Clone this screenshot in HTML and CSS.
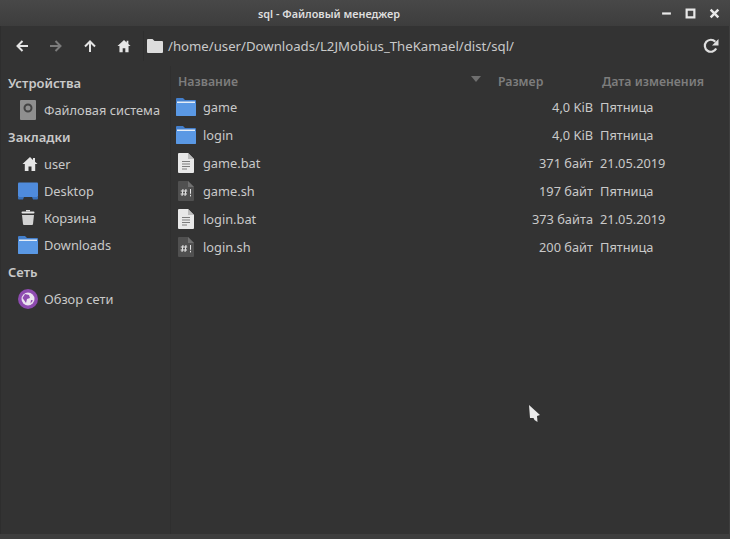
FILE: index.html
```html
<!DOCTYPE html>
<html lang="ru">
<head>
<meta charset="utf-8">
<title>sql - Файловый менеджер</title>
<link rel="stylesheet" href="styles.css">
</head>
<body>
<svg class="defs" width="0" height="0">
  <defs>
    <symbol id="folder" viewBox="0 0 20 18"><path d="M0 1a1 1 0 0 1 1-1h6l2 2h10a1 1 0 0 1 1 1v14a1 1 0 0 1-1 1H1a1 1 0 0 1-1-1z" fill="#437fcc"/><rect x="0" y="5" width="20" height="13" rx="1" fill="#5a98e4"/><rect x="1" y="3.500" width="18" height="1.500" fill="#e3ecf7"/></symbol>
    <symbol id="doc" viewBox="0 0 16 20"><path d="M0 1a1 1 0 0 1 1-1h9l6 6v13a1 1 0 0 1-1 1H1a1 1 0 0 1-1-1z" fill="#e8e8e8"/><path d="M10 0l6 6h-6z" fill="#bdbdbd"/><path d="M4 8.500h8M4 11h8M4 13.500h8M4 16h5" stroke="#7c7c7c" stroke-width="1"/></symbol>
    <symbol id="script" viewBox="0 0 16 20"><path d="M0 1a1 1 0 0 1 1-1h9l6 6v13a1 1 0 0 1-1 1H1a1 1 0 0 1-1-1z" fill="#505050"/><path d="M10 0l6 6h-6z" fill="#707070"/><path d="M5 8l-1 7M8 8l-1 7M2.800 10h6.400M2.600 13h6.400M12.500 8v4.800M12.500 13.800v1.600" stroke="#e4e4e4" stroke-width="1" fill="none"/></symbol>
    <symbol id="house" viewBox="0 0 16 16"><path d="M8 1L0.500 8h2.300v7h3.700v-4.500h3V15h3.700V8h2.300l-2.500-2.300V2h-2v1.900z" fill="#e6e6e6"/></symbol>
  </defs>
</svg>
<div class="window">
  <header class="titlebar">
    <span class="title">sql - Файловый менеджер</span>
    <div class="wm">
      <svg class="wm-icon" viewBox="0 0 10 10"><rect x="1" y="4" width="8" height="2" fill="#e8e8e8"/></svg>
      <svg class="wm-icon" viewBox="0 0 10 10"><path d="M1.500 1.500h7v7h-7z" fill="none" stroke="#e8e8e8" stroke-width="2"/></svg>
      <svg class="wm-icon" viewBox="0 0 10 10"><path d="M1.500 1.500l7 7M8.500 1.500l-7 7" stroke="#e8e8e8" stroke-width="2.200"/></svg>
    </div>
  </header>
  <div class="toolbar">
    <div class="nav">
      <svg class="nav-icon" viewBox="0 0 14 14"><path d="M13 7H3M7.500 2L2.500 7l5 5" fill="none" stroke="#e4e4e4" stroke-width="2"/></svg>
      <svg class="nav-icon" viewBox="0 0 14 14"><path d="M1 7h10M6.500 2l5 5-5 5" fill="none" stroke="#7b7b7b" stroke-width="2"/></svg>
      <svg class="nav-icon" viewBox="0 0 14 14"><path d="M7 13V3M2 7.500l5-5 5 5" fill="none" stroke="#e4e4e4" stroke-width="2"/></svg>
      <svg class="nav-icon"><use href="#house"/></svg>
    </div>
    <div class="path">
      <svg class="path-folder" viewBox="0 0 16 14"><path d="M0 1a1 1 0 0 1 1-1h4.500l2 2H15a1 1 0 0 1 1 1v10a1 1 0 0 1-1 1H1a1 1 0 0 1-1-1z" fill="#dcdcdc"/></svg>
      <span class="path-text">/home/user/Downloads/L2JMobius_TheKamael/dist/sql/</span>
    </div>
    <svg class="reload" viewBox="0 0 16 16"><path d="M13.200 10.500A6 6 0 1 1 12.300 3.700" fill="none" stroke="#dedede" stroke-width="2.200"/><path d="M15.500 1v6.500H9z" fill="#dedede"/></svg>
  </div>
  <div class="main">
    <aside class="sidebar">
      <h2 class="section">Устройства</h2>
      <div class="place"><svg class="place-icon disk" viewBox="0 0 16 20"><rect width="16" height="20" rx="1" fill="#8f8f8f"/><circle cx="8" cy="8" r="3.500" fill="none" stroke="#444" stroke-width="2"/></svg><span>Файловая система</span></div>
      <h2 class="section">Закладки</h2>
      <div class="place"><svg class="place-icon home"><use href="#house"/></svg><span>user</span></div>
      <div class="place"><svg class="place-icon" viewBox="0 0 20 17"><rect width="20" height="14.500" rx="1" fill="#4f8bdc"/><path d="M0 14.500h20V16a1 1 0 0 1-1 1h-4l-1-2.500H6L5 17H1a1 1 0 0 1-1-1z" fill="#3a71ba"/></svg><span>Desktop</span></div>
      <div class="place"><svg class="place-icon trash" viewBox="0 0 14 15"><rect x="5" y="0" width="4" height="1.500" fill="#dcdcdc"/><rect x="0.500" y="1.500" width="13" height="2" rx="1" fill="#e6e6e6"/><path d="M1 5h12l-1 9a1 1 0 0 1-1 1H3a1 1 0 0 1-1-1z" fill="#d2d2d2"/></svg><span>Корзина</span></div>
      <div class="place"><svg class="place-icon"><use href="#folder"/></svg><span>Downloads</span></div>
      <h2 class="section">Сеть</h2>
      <div class="place"><svg class="place-icon net" viewBox="0 0 20 20"><circle cx="10" cy="10" r="10" fill="#8e4bb0"/><circle cx="10" cy="10" r="6.500" fill="#ebe3ef"/><path d="M7 5l4 1 1 3-3 1-1 4-2-3-1.500-2zM13 11l2 .5-2.500 3z" fill="#8e4bb0"/></svg><span>Обзор сети</span></div>
    </aside>
    <section class="files">
      <div class="row head">
        <span class="c-name">Название</span>
        <svg class="sort" viewBox="0 0 10 6"><path d="M0 0h10L5 6z" fill="#6f6f6f"/></svg>
        <span class="c-size">Размер</span>
        <span class="c-date">Дата изменения</span>
      </div>
      <div class="row"><span class="c-name"><svg class="file-icon"><use href="#folder"/></svg>game</span><span class="c-size">4,0 KiB</span><span class="c-date">Пятница</span></div>
      <div class="row"><span class="c-name"><svg class="file-icon"><use href="#folder"/></svg>login</span><span class="c-size">4,0 KiB</span><span class="c-date">Пятница</span></div>
      <div class="row"><span class="c-name"><svg class="file-icon narrow"><use href="#doc"/></svg>game.bat</span><span class="c-size">371 байт</span><span class="c-date">21.05.2019</span></div>
      <div class="row"><span class="c-name"><svg class="file-icon narrow"><use href="#script"/></svg>game.sh</span><span class="c-size">197 байт</span><span class="c-date">Пятница</span></div>
      <div class="row"><span class="c-name"><svg class="file-icon narrow"><use href="#doc"/></svg>login.bat</span><span class="c-size">373 байта</span><span class="c-date">21.05.2019</span></div>
      <div class="row"><span class="c-name"><svg class="file-icon narrow"><use href="#script"/></svg>login.sh</span><span class="c-size">200 байт</span><span class="c-date">Пятница</span></div>
    </section>
  </div>
  <footer class="statusbar"></footer>
</div>
<svg class="cursor" viewBox="0 0 11 18"><path d="M0 0l11 10-3 1 .5 6-3-2-1-2-3.500 0z" fill="#eaeaea"/></svg>
</body>
</html>
```
FILE: styles.css
```css
* { box-sizing: border-box; }
html, body { margin: 0; height: 100%; }
body {
  font-family: "Noto Sans", sans-serif;
  font-size: 12.8px;
  color: #c9c9c9;
  background: #333;
  overflow: hidden;
}
.defs { position: absolute; }
.window { width: 730px; height: 539px; display: flex; flex-direction: column; background: #333; }

.titlebar {
  height: 26px;
  flex: none;
  display: flex;
  align-items: center;
  justify-content: center;
  position: relative;
  padding-right: 72px;
  background: linear-gradient(#484848, #3d3d3d);
}
.title { font-size: 10.85px; font-weight: 600; color: #dedede; }
.wm { position: absolute; top: 8px; right: 10px; display: flex; gap: 13px; }
.wm-icon { width: 11px; height: 11px; }

.toolbar {
  height: 40px;
  flex: none;
  display: flex;
  align-items: center;
  padding: 0 10px 0 14px;
  background: #333;
  border-left: 1px solid #2e2e2e;
  border-right: 1px solid #3e3e3e;
}
.nav { display: flex; gap: 20px; align-items: center; width: 128px; flex: none; }
.nav-icon { width: 14px; height: 14px; flex: none; }
.path {
  flex: 1;
  display: flex;
  align-items: center;
  gap: 5px;
  height: 30px;
  padding-left: 3px;
  border-left: 1px solid #2e2e2e;
}
.path-folder { width: 16px; height: 14px; margin-top: -1px; flex: none; }
.path-text { font-size: 13.2px; color: #c9c9c9; }
.reload { width: 16px; height: 16px; }

.main {
  flex: 1;
  display: flex;
  min-height: 0;
  border-left: 1px solid #2e2e2e;
  border-right: 1px solid #3e3e3e;
}
.sidebar {
  width: 170px;
  flex: none;
  padding-top: 4px;
  border-right: 1px solid #2f2f2f;
}
.section {
  margin: 0;
  height: 27px;
  line-height: 27px;
  padding-left: 7px;
  font-size: 13px;
  font-weight: 600;
  color: #c9c9c9;
}
.place {
  height: 27px;
  display: flex;
  align-items: center;
  padding: 0 0 2px 17px;
  position: relative;
}
.place span { position: absolute; left: 43px; }
.place-icon { width: 20px; height: 18px; }
.disk { width: 16px; height: 20px; margin-left: 2px; }
.home { width: 16px; height: 16px; margin-left: 4px; }
.trash { width: 14px; height: 15px; margin-left: 3px; }
.net { height: 20px; }

.files { flex: 1; min-width: 0; }
.row { height: 28px; display: flex; align-items: center; position: relative; }
.row.head { height: 27px; color: #7d7d7d; font-size: 12.3px; font-weight: 600; padding-top: 4px; }
.c-name { display: flex; align-items: center; width: 316px; padding-left: 5px; }
.head .c-name { width: 300px; padding-left: 7px; }
.file-icon { width: 20px; height: 18px; margin-right: 7px; flex: none; }
.file-icon.narrow { width: 16px; height: 20px; margin-left: 2px; margin-right: 9px; }
.sort { width: 10px; height: 6px; margin-right: 17px; margin-top: -6px; flex: none; }
.c-size { width: 106px; text-align: right; }
.head .c-size { width: 104px; text-align: left; }
.c-date { padding-left: 7px; white-space: nowrap; }
.head .c-date { padding-left: 0; }

.statusbar { height: 5px; flex: none; background: #3e3e3e; }
.cursor { position: absolute; left: 529px; top: 405px; width: 11px; height: 18px; }
```
